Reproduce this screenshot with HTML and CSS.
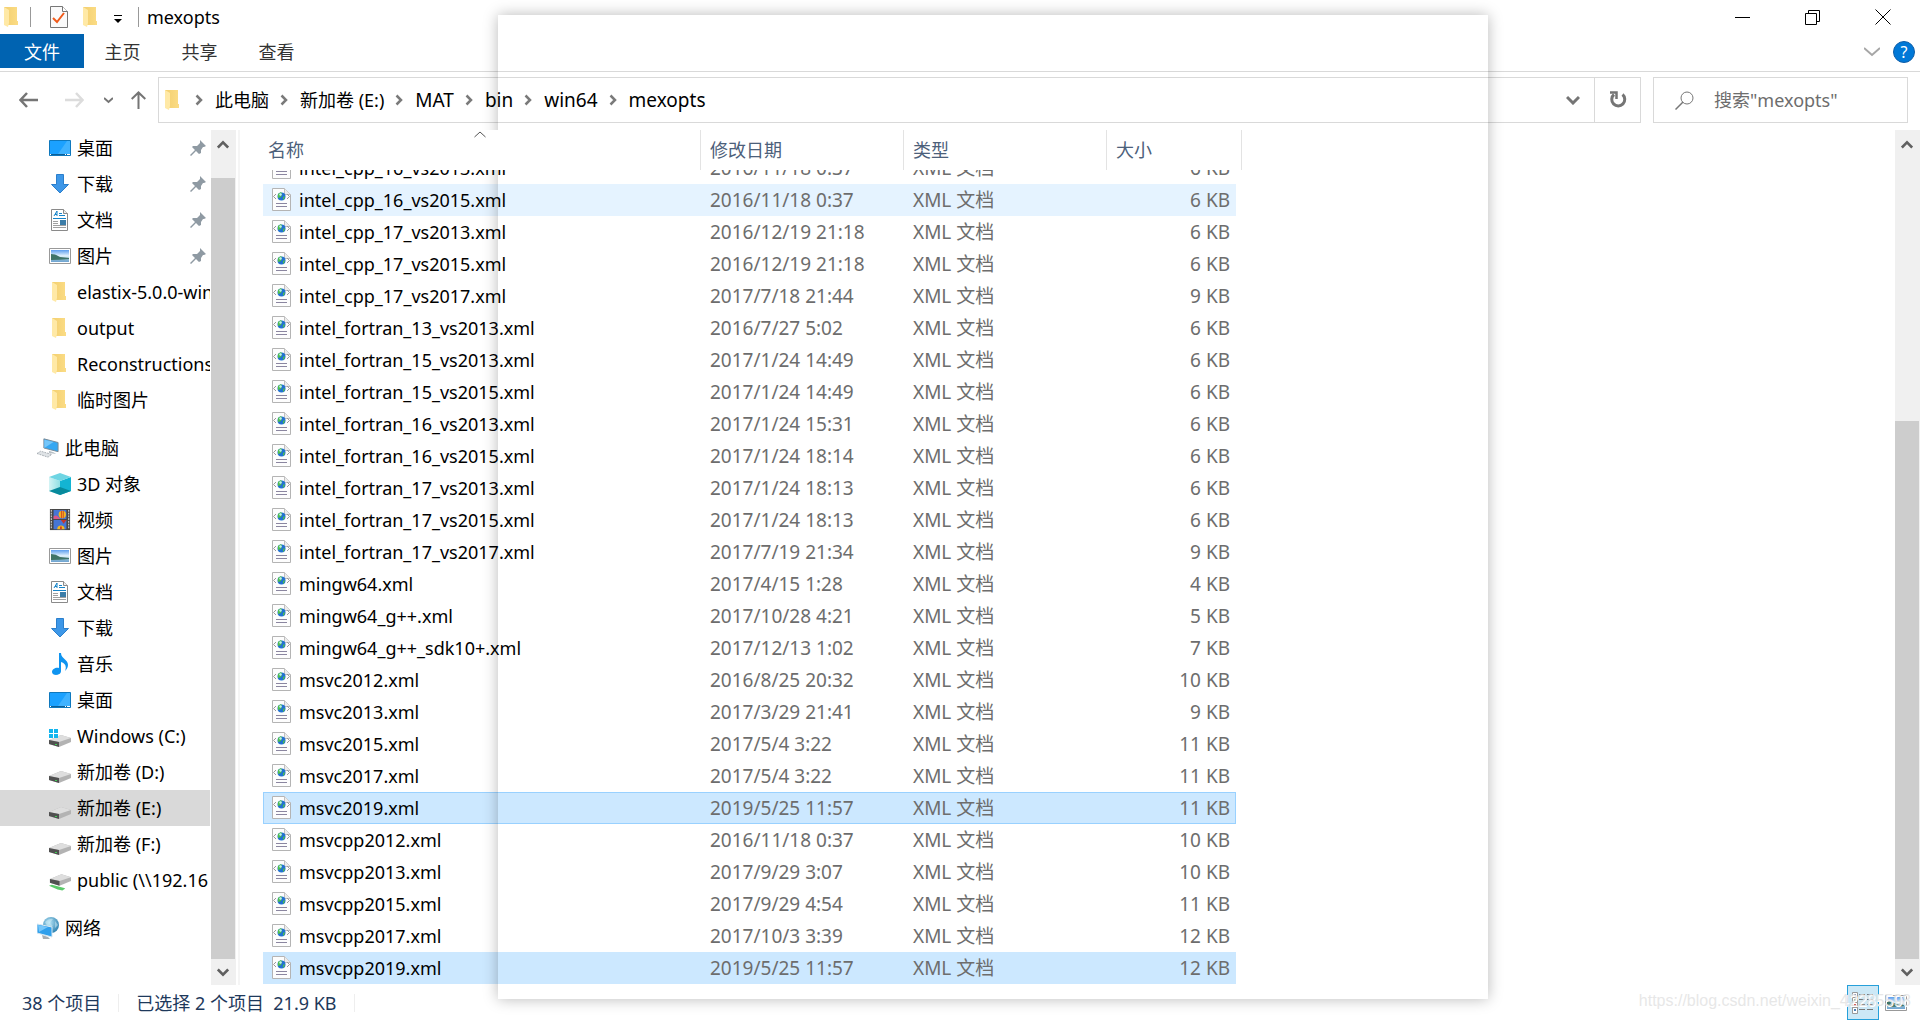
FILE: index.html
```html
<!DOCTYPE html>
<html lang="zh-CN">
<head>
<meta charset="utf-8">
<title>mexopts</title>
<link rel="stylesheet" href="styles.css">
</head>
<body>
<svg class="sprite" aria-hidden="true">
  <defs>
    <linearGradient id="gFolder" x1="0" x2="1"><stop offset="0" stop-color="#f3cf6f"/><stop offset="1" stop-color="#fbdc85"/></linearGradient>
    <linearGradient id="gSky" x1="0" y1="0" x2="0" y2="1"><stop offset="0" stop-color="#5b9dee"/><stop offset=".5" stop-color="#e6f4fd"/><stop offset=".75" stop-color="#8db9d0"/><stop offset="1" stop-color="#6fa4d4"/></linearGradient>
    <radialGradient id="gGlobe" cx=".4" cy=".35" r=".7"><stop offset="0" stop-color="#b5e4f7"/><stop offset="1" stop-color="#2a7fae"/></radialGradient>
    <linearGradient id="gCube" x1="0" x2="1"><stop offset="0" stop-color="#d4f4f5"/><stop offset="1" stop-color="#90e0e4"/></linearGradient>
  </defs>
  <symbol id="folder" viewBox="0 0 22 22"><path d="M3 1h13v14h1v4H5z" fill="url(#gFolder)"/><path d="M3 1l5 3v13l-1 4-4-2z" fill="#ffe9a6"/></symbol>
  <symbol id="desktop" viewBox="0 0 22 22"><path d="M.5 3.500h21v15H.5z" fill="#1ba1ff" stroke="#0f78bd"/><path d="M9 17L18 4h3v13z" fill="#3fb2ff"/><path d="M1 17.500h20" stroke="#0c5f97"/><path d="M1 17.500h1M16 17.500h1M18 17.500h3" stroke="#fff"/></symbol>
  <symbol id="download" viewBox="0 0 22 22"><path d="M7.500 1.500h7v10h5L11 20l-8.500-8.500h5z" fill="#3d97e8" stroke="#2b7fcc"/></symbol>
  <symbol id="doc" viewBox="0 0 22 22"><path d="M2.500.5h12l4 4v17h-16z" fill="#fff" stroke="#8a8a8a"/><path d="M14.500.5v4h4" fill="#eee" stroke="#8a8a8a"/><path d="M5 7l3-5v5M6 5.500h2M10 4.500h3M10 6.500h6" stroke="#1684c9" fill="none"/><path d="M4 9.500h13" stroke="#1684c9"/><path d="M4 12.500h5M4 14.500h5M4 16.500h13M4 18.500h13" stroke="#a0a0a0"/><path d="M11 11h6v5h-6z" fill="#3c7da8"/></symbol>
  <symbol id="picture" viewBox="0 0 22 22"><path d="M.5 3.500h21v15H.5z" fill="#fff" stroke="#999"/><path d="M2 5h18v12H2z" fill="url(#gSky)"/><path d="M2 9q5 0 9 3l9 1v1q-10 1-18 1z" fill="#3f7468"/></symbol>
  <symbol id="pin" viewBox="0 0 16 16"><path d="M10 0l6 6-2 1-1 0-2 3v3l-2 1-3-3-5 5-1-1 5-5-3-3 1-1h4l3-3z" fill="#8f9aa3"/></symbol>
  <symbol id="pc" viewBox="0 0 24 22"><path d="M7.500 1l15.500 4v10L7.500 11z" fill="#35a7f2" stroke="#7b8790"/><path d="M8 2l10 2.500L8 11z" fill="#74c6fa"/><path d="M13 14l5 1.500 3 2-8-1z" fill="#b8c0c6"/><path d="M0 17l4-2.500L16 18l-4 3z" fill="#dfe3e6" stroke="#a4abb1" stroke-dasharray="2 1"/></symbol>
  <symbol id="cube" viewBox="0 0 22 22"><path d="M0 4l11 4v14L0 18z" fill="url(#gCube)"/><path d="M22 4L11 8v14l11-4z" fill="#13b4d3"/><path d="M0 4l11-4 11 4-11 4z" fill="#6fd5e3"/><path d="M0 18l11-4 11 4-11 4z" fill="#078a9c"/></symbol>
  <symbol id="video" viewBox="0 0 22 24"><path d="M0 0h22v23H0z" fill="#474747"/><path d="M1.500 1v21M20.500 1v21" stroke="#eee" stroke-dasharray="2 1"/><path d="M4 1h14v10H4zM4 12h14v10H4z" fill="#4676d6"/><circle cx="13.500" cy="6" r="4" fill="#f4b81f"/><path d="M12 2h1v8h-1zM14 2h1v8h-1z" fill="#d33d24"/><path d="M4 8q4-3 7 3H4z" fill="#d85888"/><path d="M12 12h6l-3 4z" fill="#c8352b"/><path d="M8 22a4 4 0 018 0z" fill="#f4b81f"/><path d="M11 19h2v3h-2z" fill="#d33d24"/></symbol>
  <symbol id="music" viewBox="0 0 22 22"><path d="M10 0h2c0 6 7 6 7 12 0 3-2 5-3 6 2-5 0-8-4-9v9c0 5-9 5-9 1 0-3 4-5 7-4z" fill="#0f94f0"/></symbol>
  <symbol id="drive" viewBox="0 0 22 22"><path d="M0 15l12-5 10 3v4l-12 5L0 19z" fill="#b3b3b3"/><path d="M0 15l12-5 10 3-12 4z" fill="#dedede"/><path d="M0 15l10 2v5L0 19z" fill="#505050"/><path d="M6 19.500h2" stroke="#42cf55"/></symbol>
  <symbol id="windrive" viewBox="0 0 22 22"><use href="#drive"/><path d="M0 4h4v4H0zM5 4h4v4H5zM0 9h4v4H0zM5 9h4v4H5z" fill="#12b5ee"/></symbol>
  <symbol id="netdrive" viewBox="0 0 23 22"><path d="M0 17l3-1 12 3 2 1-3 2-5-1z" fill="#5bc96a"/><path d="M1 10l12-5 10 3v4l-12 5-10-3z" fill="#b3b3b3"/><path d="M1 10l12-5 10 3-12 4z" fill="#dedede"/><path d="M1 10l10 2v5L1 14z" fill="#505050"/></symbol>
  <symbol id="network" viewBox="0 0 22 22"><circle cx="14" cy="8" r="8" fill="url(#gGlobe)"/><path d="M8 5q5-4 8-3l-3 4 3 3-4 3zM18 4l3 4-3 3z" fill="#d2edf6" opacity=".5"/><path d="M0 7l15 3v10L0 16z" fill="#2f9fec" stroke="#d6e7f1"/><path d="M1 8l10 2-9 5z" fill="#74c6fa"/><path d="M5 18l6 2 2 2H6z" fill="#a7aeb3"/></symbol>
  <symbol id="xml" viewBox="0 0 19 23"><path d="M.5.500h12l6 6v16H.5z" fill="#fdfdfd" stroke="#b4b4b4"/><path d="M12.500.5v6h6" fill="#ececec" stroke="#c0c0c0"/><path d="M4 6L1.500 8.500 4 11M15 6l2.500 2.500L15 11" fill="none" stroke="#999"/><circle cx="9.500" cy="8.500" r="4" fill="#2272d2"/><path d="M6 6l3-2 1 2-1 3-3 1zM11 9l2-1-1 3-1 1z" fill="#4dc04a"/><path d="M7 6l2-1 1 2-2 1z" fill="#bfeaf7"/><path d="M4 15.500h11M4 18.500h11" stroke="#8b86a0"/></symbol>
  <symbol id="chevR" viewBox="0 0 8 12"><path d="M1.500 1.500L6 6l-4.500 4.500" fill="none" stroke="#7a7a7a" stroke-width="2.500"/></symbol>
  <symbol id="chevD" viewBox="0 0 14 10"><path d="M1 2l6 6 6-6" fill="none" stroke="currentColor" stroke-width="3"/></symbol>
  <symbol id="chevU" viewBox="0 0 14 10"><path d="M1 8l6-6 6 6" fill="none" stroke="currentColor" stroke-width="3"/></symbol>
</svg>

<div class="window">
  <header class="titlebar">
    <svg class="i22"><use href="#folder"/></svg>
    <span class="bar"></span>
    <button class="quick" aria-label="属性"><svg width="18" height="22" viewBox="0 0 18 22"><path d="M.5.500h12l5 5v16H.5z" fill="#fafafa" stroke="#777"/><path d="M12.500.5v5h5" fill="#fff" stroke="#777"/><path d="M3 12l4 4 7-9" fill="none" stroke="#f05a1a" stroke-width="2"/></svg></button>
    <button class="quick" aria-label="新建文件夹"><svg class="i22"><use href="#folder"/></svg></button>
    <button class="quick more" aria-label="自定义"><svg width="10" height="8" viewBox="0 0 10 8"><path d="M1 .500h8" stroke="#000"/><path d="M1 4h8L5 8z"/></svg></button>
    <span class="bar"></span>
    <h1>mexopts</h1>
    <div class="winbtns">
      <button aria-label="最小化"><svg width="16" height="16" viewBox="0 0 16 16"><path d="M0 8.500h15" stroke="#000"/></svg></button>
      <button aria-label="还原"><svg width="16" height="16" viewBox="0 0 16 16"><path d="M.5 4.500h11v11H.5zM3.500 4V1.500h11v11H12" fill="none" stroke="#000"/></svg></button>
      <button aria-label="关闭"><svg width="16" height="16" viewBox="0 0 16 16"><path d="M.5.500l15 15M15.500.5l-15 15" stroke="#000"/></svg></button>
    </div>
  </header>

  <nav class="ribbon">
    <button class="file">文件</button>
    <button>主页</button>
    <button>共享</button>
    <button>查看</button>
    <div class="ribbonend">
      <button aria-label="展开功能区"><svg width="16" height="10" viewBox="0 0 16 10"><path d="M0 1l8 7 8-7" fill="none" stroke="#a6a6a6" stroke-width="2"/></svg></button>
      <button class="help" aria-label="帮助">?</button>
    </div>
  </nav>

  <div class="toolbar">
    <div class="navbtns">
      <button aria-label="后退"><svg width="19" height="16" viewBox="0 0 19 16"><path d="M19 8H2M8 1L1.500 8 8 15" fill="none" stroke="#757575" stroke-width="2.500"/></svg></button>
      <button aria-label="前进"><svg width="19" height="16" viewBox="0 0 19 16"><path d="M0 8h17M11 1l6.500 7L11 15" fill="none" stroke="#dcdcdc" stroke-width="2.500"/></svg></button>
      <button aria-label="最近"><svg width="9" height="7" viewBox="0 0 9 7"><path d="M0 1l4.500 4L9 1" fill="none" stroke="#757575" stroke-width="2"/></svg></button>
      <button aria-label="向上"><svg width="15" height="18" viewBox="0 0 15 18"><path d="M7.500 18V2M.700 8l6.800-6.500L14.300 8" fill="none" stroke="#757575" stroke-width="2"/></svg></button>
    </div>
    <div class="address">
      <svg class="i22"><use href="#folder"/></svg>
      <svg class="sep"><use href="#chevR"/></svg><a href="#" class="zh">此电脑</a>
      <svg class="sep"><use href="#chevR"/></svg><a href="#" class="zh">新加卷 (E:)</a>
      <svg class="sep"><use href="#chevR"/></svg><a href="#">MAT</a>
      <svg class="sep"><use href="#chevR"/></svg><a href="#">bin</a>
      <svg class="sep"><use href="#chevR"/></svg><a href="#">win64</a>
      <svg class="sep"><use href="#chevR"/></svg><a href="#">mexopts</a>
      <button class="drop" aria-label="历史记录"><svg width="14" height="10"><use href="#chevD"/></svg></button>
      <button class="refresh" aria-label="刷新"><svg width="18" height="18" viewBox="0 0 18 18"><path d="M13.500 3.500a6.500 6.500 0 11-8.500 0" fill="none" stroke="#757575" stroke-width="3"/><path d="M1 1.500h6.500V8" fill="none" stroke="#757575" stroke-width="2.500"/></svg></button>
    </div>
    <label class="search">
      <svg width="19" height="19" viewBox="0 0 19 19"><circle cx="12" cy="7" r="6" fill="none" stroke="#777"/><path d="M8 11L.5 18.500" stroke="#777" stroke-width="1.500"/></svg>
      <input type="text" aria-label="搜索" placeholder='搜索"mexopts"'>
    </label>
  </div>

  <div class="content">
    <aside class="tree">
      <ul>
        <li><a href="#"><svg class="i22"><use href="#desktop"/></svg><span>桌面</span></a><svg class="pin"><use href="#pin"/></svg></li>
        <li><a href="#"><svg class="i22"><use href="#download"/></svg><span>下载</span></a><svg class="pin"><use href="#pin"/></svg></li>
        <li><a href="#"><svg class="i22"><use href="#doc"/></svg><span>文档</span></a><svg class="pin"><use href="#pin"/></svg></li>
        <li><a href="#"><svg class="i22"><use href="#picture"/></svg><span>图片</span></a><svg class="pin"><use href="#pin"/></svg></li>
        <li><a href="#"><svg class="i22"><use href="#folder"/></svg><span>elastix-5.0.0-win64</span></a></li>
        <li><a href="#"><svg class="i22"><use href="#folder"/></svg><span>output</span></a></li>
        <li><a href="#"><svg class="i22"><use href="#folder"/></svg><span>Reconstructions</span></a></li>
        <li><a href="#"><svg class="i22"><use href="#folder"/></svg><span>临时图片</span></a></li>
      </ul>
      <ul>
        <li class="root"><a href="#"><svg class="i22"><use href="#pc"/></svg><span>此电脑</span></a></li>
        <li><a href="#"><svg class="i22"><use href="#cube"/></svg><span>3D 对象</span></a></li>
        <li><a href="#"><svg class="i22"><use href="#video"/></svg><span>视频</span></a></li>
        <li><a href="#"><svg class="i22"><use href="#picture"/></svg><span>图片</span></a></li>
        <li><a href="#"><svg class="i22"><use href="#doc"/></svg><span>文档</span></a></li>
        <li><a href="#"><svg class="i22"><use href="#download"/></svg><span>下载</span></a></li>
        <li><a href="#"><svg class="i22"><use href="#music"/></svg><span>音乐</span></a></li>
        <li><a href="#"><svg class="i22"><use href="#desktop"/></svg><span>桌面</span></a></li>
        <li><a href="#"><svg class="i22"><use href="#windrive"/></svg><span>Windows (C:)</span></a></li>
        <li><a href="#"><svg class="i22"><use href="#drive"/></svg><span>新加卷 (D:)</span></a></li>
        <li class="current"><a href="#"><svg class="i22"><use href="#drive"/></svg><span>新加卷 (E:)</span></a></li>
        <li><a href="#"><svg class="i22"><use href="#drive"/></svg><span>新加卷 (F:)</span></a></li>
        <li><a href="#"><svg class="i22"><use href="#netdrive"/></svg><span>public (\\192.16</span></a></li>
      </ul>
      <ul>
        <li class="root"><a href="#"><svg class="i22"><use href="#network"/></svg><span>网络</span></a></li>
      </ul>
    </aside>
    <div class="scroll treescroll">
      <button aria-label="向上滚动"><svg width="12" height="10"><use href="#chevU"/></svg></button>
      <div class="track"><div class="thumb"></div></div>
      <button aria-label="向下滚动"><svg width="12" height="10"><use href="#chevD"/></svg></button>
    </div>
    <main class="files" id="files">
      <table>
        <colgroup><col class="cname"><col class="cdate"><col class="ctype"><col class="csize"></colgroup>
        <thead><tr><th>名称<svg class="sort" width="12" height="7" viewBox="0 0 12 7"><path d="M.5 6L6 1l5.500 5" fill="none" stroke="#555"/></svg></th><th>修改日期</th><th>类型</th><th>大小</th></tr></thead>
        <tbody>
          <tr><td><svg><use href="#xml"/></svg>intel_cpp_16_vs2013.xml</td><td>2016/11/18 0:37</td><td>XML 文档</td><td>6 KB</td></tr>
          <tr class="hover"><td><svg><use href="#xml"/></svg>intel_cpp_16_vs2015.xml</td><td>2016/11/18 0:37</td><td>XML 文档</td><td>6 KB</td></tr>
          <tr><td><svg><use href="#xml"/></svg>intel_cpp_17_vs2013.xml</td><td>2016/12/19 21:18</td><td>XML 文档</td><td>6 KB</td></tr>
          <tr><td><svg><use href="#xml"/></svg>intel_cpp_17_vs2015.xml</td><td>2016/12/19 21:18</td><td>XML 文档</td><td>6 KB</td></tr>
          <tr><td><svg><use href="#xml"/></svg>intel_cpp_17_vs2017.xml</td><td>2017/7/18 21:44</td><td>XML 文档</td><td>9 KB</td></tr>
          <tr><td><svg><use href="#xml"/></svg>intel_fortran_13_vs2013.xml</td><td>2016/7/27 5:02</td><td>XML 文档</td><td>6 KB</td></tr>
          <tr><td><svg><use href="#xml"/></svg>intel_fortran_15_vs2013.xml</td><td>2017/1/24 14:49</td><td>XML 文档</td><td>6 KB</td></tr>
          <tr><td><svg><use href="#xml"/></svg>intel_fortran_15_vs2015.xml</td><td>2017/1/24 14:49</td><td>XML 文档</td><td>6 KB</td></tr>
          <tr><td><svg><use href="#xml"/></svg>intel_fortran_16_vs2013.xml</td><td>2017/1/24 15:31</td><td>XML 文档</td><td>6 KB</td></tr>
          <tr><td><svg><use href="#xml"/></svg>intel_fortran_16_vs2015.xml</td><td>2017/1/24 18:14</td><td>XML 文档</td><td>6 KB</td></tr>
          <tr><td><svg><use href="#xml"/></svg>intel_fortran_17_vs2013.xml</td><td>2017/1/24 18:13</td><td>XML 文档</td><td>6 KB</td></tr>
          <tr><td><svg><use href="#xml"/></svg>intel_fortran_17_vs2015.xml</td><td>2017/1/24 18:13</td><td>XML 文档</td><td>6 KB</td></tr>
          <tr><td><svg><use href="#xml"/></svg>intel_fortran_17_vs2017.xml</td><td>2017/7/19 21:34</td><td>XML 文档</td><td>9 KB</td></tr>
          <tr><td><svg><use href="#xml"/></svg>mingw64.xml</td><td>2017/4/15 1:28</td><td>XML 文档</td><td>4 KB</td></tr>
          <tr><td><svg><use href="#xml"/></svg>mingw64_g++.xml</td><td>2017/10/28 4:21</td><td>XML 文档</td><td>5 KB</td></tr>
          <tr><td><svg><use href="#xml"/></svg>mingw64_g++_sdk10+.xml</td><td>2017/12/13 1:02</td><td>XML 文档</td><td>7 KB</td></tr>
          <tr><td><svg><use href="#xml"/></svg>msvc2012.xml</td><td>2016/8/25 20:32</td><td>XML 文档</td><td>10 KB</td></tr>
          <tr><td><svg><use href="#xml"/></svg>msvc2013.xml</td><td>2017/3/29 21:41</td><td>XML 文档</td><td>9 KB</td></tr>
          <tr><td><svg><use href="#xml"/></svg>msvc2015.xml</td><td>2017/5/4 3:22</td><td>XML 文档</td><td>11 KB</td></tr>
          <tr><td><svg><use href="#xml"/></svg>msvc2017.xml</td><td>2017/5/4 3:22</td><td>XML 文档</td><td>11 KB</td></tr>
          <tr class="selected focused"><td><svg><use href="#xml"/></svg>msvc2019.xml</td><td>2019/5/25 11:57</td><td>XML 文档</td><td>11 KB</td></tr>
          <tr><td><svg><use href="#xml"/></svg>msvcpp2012.xml</td><td>2016/11/18 0:37</td><td>XML 文档</td><td>10 KB</td></tr>
          <tr><td><svg><use href="#xml"/></svg>msvcpp2013.xml</td><td>2017/9/29 3:07</td><td>XML 文档</td><td>10 KB</td></tr>
          <tr><td><svg><use href="#xml"/></svg>msvcpp2015.xml</td><td>2017/9/29 4:54</td><td>XML 文档</td><td>11 KB</td></tr>
          <tr><td><svg><use href="#xml"/></svg>msvcpp2017.xml</td><td>2017/10/3 3:39</td><td>XML 文档</td><td>12 KB</td></tr>
          <tr class="selected"><td><svg><use href="#xml"/></svg>msvcpp2019.xml</td><td>2019/5/25 11:57</td><td>XML 文档</td><td>12 KB</td></tr>
        </tbody>
      </table>
    </main>
    <div class="scroll filescroll">
      <button aria-label="向上滚动"><svg width="12" height="10"><use href="#chevU"/></svg></button>
      <div class="track"><div class="thumb"></div></div>
      <button aria-label="向下滚动"><svg width="12" height="10"><use href="#chevD"/></svg></button>
    </div>
  </div>

  <footer class="status">
    <span>38 个项目</span>
    <span>已选择 2 个项目&nbsp; 21.9 KB</span>
    <div class="views">
      <button class="on" aria-label="详细信息"><svg width="22" height="22" viewBox="0 0 22 22"><path d="M.5.500h5v5h-5zM.5 5.500h5v5h-5zM.5 10.500h5v5h-5zM.5 15.500h5v6h-5z" fill="#fff" stroke="#999"/><path d="M2 3h2M2 18h2" stroke="#4a7fb5" stroke-width="2"/><path d="M2 8h2" stroke="#7a9a3a" stroke-width="2"/><path d="M2 13h2" stroke="#c33" stroke-width="2"/><path d="M7 2.500h15M7 7.500h15M7 12.500h15M7 17.500h15" stroke="#777" stroke-dasharray="6 2"/></svg></button>
      <button aria-label="大图标"><svg class="i22"><use href="#picture"/></svg></button>
    </div>
  </footer>
  <div class="ghost"></div>
  <div class="watermark">https://blog.csdn.net/weixin_42285598</div>
</div>
<script>document.getElementById('files').scrollTop = 18;</script>
</body>
</html>
```
FILE: styles.css
```css
* { box-sizing: border-box; }
body {
  margin: 0;
  background: #fff;
  color: #000;
  font: 19px/24px "Noto Sans", "Noto Sans CJK SC", sans-serif;
}
button {
  display: flex;
  align-items: center;
  justify-content: center;
  margin: 0;
  padding: 0;
  border: 0;
  background: none;
  color: inherit;
  font: inherit;
}
a { color: inherit; text-decoration: none; }
svg { display: block; flex: none; }
.sprite { position: absolute; width: 0; height: 0; }
.i22 { width: 22px; height: 22px; }
.zh { font-size: 18px; }

.window {
  position: relative;
  display: flex;
  flex-direction: column;
  height: 100vh;
  overflow: hidden;
}

.titlebar {
  display: flex;
  align-items: center;
  flex: none;
  height: 34px;
  padding-left: 1px;
}
.titlebar .bar { width: 1px; height: 20px; margin-left: 7px; background: #999; }
.titlebar h1 { margin: 0 0 0 8px; font-size: 18px; font-weight: 400; }
.quick { margin-left: 12px; }
.quick:nth-of-type(1) { margin-left: 19px; }
.quick.more { margin-left: 11px; padding-top: 4px; }
.quick.more + .bar { margin-left: 15px; }
.winbtns { display: flex; margin-left: auto; padding-right: 2px; }
.winbtns button { width: 70px; height: 34px; }

.ribbon {
  display: flex;
  flex: none;
  height: 38px;
  padding-bottom: 3px;
  border-bottom: 1px solid #d9d9d9;
  color: #333;
  font-size: 18px;
}
.ribbon > button { width: 77px; height: 34px; padding-top: 2px; }
.ribbon > .file { width: 84px; background: #0063b1; color: #fff; }
.ribbonend { display: flex; align-items: center; gap: 13px; margin-left: auto; padding: 2px 5px 0 0; }
.ribbon .help {
  width: 22px;
  height: 22px;
  border: 1px solid #0f5ea8;
  border-radius: 50%;
  background: #0078d7;
  color: #fff;
  font-size: 16px;
}

.toolbar {
  display: flex;
  flex: none;
  height: 58px;
  padding: 5px 12px 7px 0;
}
.navbtns { display: flex; align-items: center; width: 158px; padding-left: 19px; }
.navbtns button:nth-child(2) { margin-left: 27px; }
.navbtns button:nth-child(3) { margin-left: 20px; }
.navbtns button:nth-child(4) { margin-left: 18px; }
.address {
  display: flex;
  flex: 1;
  align-items: center;
  padding-left: 3px;
  border: 1px solid #d9d9d9;
}
.address .sep { width: 8px; height: 12px; margin: 0 12px 0 11px; }
.address .drop { width: 42px; height: 100%; margin-left: auto; color: #757575; }
.address .refresh { width: 46px; height: 100%; border-left: 1px solid #d9d9d9; }
.search {
  display: flex;
  align-items: center;
  width: 255px;
  margin-left: 12px;
  padding-left: 21px;
  border: 1px solid #d9d9d9;
}
.search input {
  flex: 1;
  min-width: 0;
  margin-left: 20px;
  padding: 0;
  border: 0;
  outline: 0;
  background: none;
  font: inherit;
  font-size: 18px;
}
.search input::placeholder { color: #6d6d6d; opacity: 1; }

.content { display: flex; flex: 1; min-height: 0; }
.tree { width: 210px; flex: none; overflow: hidden; font-size: 18px; }
.tree ul { margin: 0 0 12px; padding: 0; list-style: none; }
.tree li { display: flex; align-items: center; height: 36px; padding-left: 49px; white-space: nowrap; }
.tree li.root { padding-left: 37px; }
.tree li.current { background: #d9d9d9; }
.tree a { display: flex; align-items: center; gap: 6px; }
.tree .pin { width: 16px; height: 16px; margin: 0 4px 0 auto; }

.scroll {
  display: flex;
  flex-direction: column;
  flex: none;
  width: 25px;
  background: #f0f0f0;
  color: #606060;
}
.scroll button { height: 26px; margin-right: 1px; flex: none; }
.scroll button:first-child { height: 30px; }
.scroll .track { display: flex; flex-direction: column; flex: 1; }
.scroll .thumb { flex: 1; margin-right: 1px; background: #cdcdcd; }
.treescroll { margin-left: 1px; }
.treescroll .track { padding-top: 18px; }
.filescroll .track { padding-top: 261px; }

.files {
  flex: 1;
  min-width: 0;
  margin-left: 2px;
  padding: 0 0 2px 23px;
  border-left: 2px solid #f5f5f5;
  overflow: auto;
  scrollbar-width: none;
}
table { width: 973px; border-collapse: separate; border-spacing: 0; table-layout: fixed; }
.cname { width: 438px; }
.cdate, .ctype { width: 203px; }
th {
  position: sticky;
  top: 0;
  z-index: 1;
  height: 40px;
  padding: 0 9px;
  border-right: 1px solid #e3e3e3;
  background: #fff;
  color: #4c607a;
  font-size: 18px;
  font-weight: 400;
  text-align: left;
}
th:first-child { padding-left: 5px; }
th:last-child { border-right: 0; }
th:last-child::after {
  content: "";
  position: absolute;
  top: 0;
  right: -6px;
  width: 1px;
  height: 100%;
  background: #e3e3e3;
}
.sort { position: absolute; top: 1px; left: 211px; }
td { height: 32px; padding: 0 9px; color: #6d6d6d; line-height: 24px; }
td:first-child { padding-left: 36px; color: #000; font-size: 18px; position: relative; }
td:last-child { padding-right: 6px; text-align: right; }
td svg { position: absolute; top: 4px; left: 9px; width: 19px; height: 23px; }
.hover td { background: #e5f3ff; }
.selected td { background: #cce8ff; }
.focused td { box-shadow: inset 0 1px #99d1ff, inset 0 -1px #99d1ff; }
.focused td:first-child { box-shadow: inset 1px 1px #99d1ff, inset 0 -1px #99d1ff; }
.focused td:last-child { box-shadow: inset 0 1px #99d1ff, inset -1px -1px #99d1ff; }

.status {
  display: flex;
  align-items: center;
  flex: none;
  height: 35px;
  padding-left: 22px;
  color: #1e395b;
  font-size: 18px;
}
.status > span { padding-right: 17px; margin-right: 17px; border-right: 1px solid #eee; line-height: 18px; }
.views { display: flex; align-items: center; height: 100%; margin-left: auto; padding-right: 13px; }
.views button { margin-left: 6px; }
.views .on { width: 32px; height: 100%; border: 1px solid #26a0da; background: #cce8f6; }

.ghost {
  position: absolute;
  inset: 15px 432px 21px 498px;
  box-shadow: 0 0 14px rgba(0, 0, 0, .28);
  pointer-events: none;
}
.watermark {
  position: absolute;
  right: 9px;
  bottom: 7px;
  color: rgba(225, 225, 225, .8);
  font: 16px/24px "Liberation Sans", sans-serif;
  text-shadow: 1px 1px #fff;
  pointer-events: none;
}
```
